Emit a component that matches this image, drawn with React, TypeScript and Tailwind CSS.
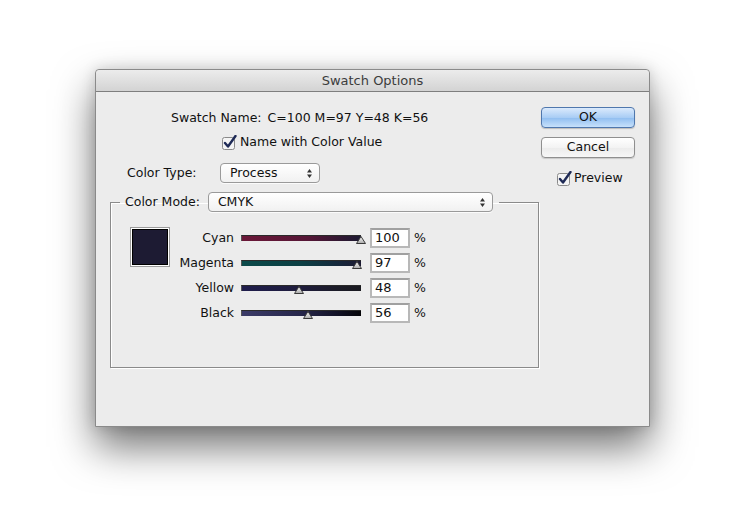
import React from 'react'

const font = { fontFamily: '"DejaVu Sans", "Liberation Sans", sans-serif' }

const channels = [
  { name: 'Cyan', value: 100, bar: 'bg-[linear-gradient(to_right,#6b1838,#561636_55%,#2e1832_85%,#1d1b33)]' },
  { name: 'Magenta', value: 97, bar: 'bg-[linear-gradient(to_right,#0b4a4a,#0c3f44_50%,#15283c_80%,#1d1b33)]' },
  { name: 'Yellow', value: 48, bar: 'bg-[linear-gradient(to_right,#1f1d4c,#1e1c3c_50%,#1c1c28_80%,#1a1a20)]' },
  { name: 'Black', value: 56, bar: 'bg-[linear-gradient(to_right,#3b3b68,#26264a_50%,#121226_80%,#050508)]' },
]

function CheckBox() {
  return (
    <svg width="15" height="15" viewBox="0 0 15 15" className="shrink-0">
      <rect x="0.5" y="2.5" width="12" height="12" rx="2" fill="#f4f4f4" stroke="#8a8a8a" />
      <path d="M3 8 L6 11.5 L13.5 1" fill="none" stroke="#1e2a56" strokeWidth="2.4" strokeLinecap="round" strokeLinejoin="round" />
    </svg>
  )
}

function UpDown() {
  return (
    <svg width="7" height="11" viewBox="0 0 7 11" className="shrink-0">
      <path d="M3.5 1 L6 4.5 L1 4.5 Z" fill="#333" />
      <path d="M3.5 10 L6 6.5 L1 6.5 Z" fill="#333" />
    </svg>
  )
}

function Popup({ label, width }: { label: string; width: string }) {
  return (
    <div
      className={`${width} h-[20px] flex items-center justify-between pl-[9px] pr-[6px] rounded-[4px] border border-[#9a9a9a] bg-[linear-gradient(#ffffff,#f1f1f1)] shadow-[0_1px_0_rgba(255,255,255,0.8)] text-[12.5px] text-[#111]`}
    >
      <span>{label}</span>
      <UpDown />
    </div>
  )
}

function Thumb({ value }: { value: number }) {
  return (
    <svg
      width="10"
      height="8"
      viewBox="0 0 10 8"
      className="absolute top-[1px]"
      style={{ left: `${(value / 100) * 120 - 5}px` }}
    >
      <defs>
        <linearGradient id="th" x1="0" y1="0" x2="0" y2="1">
          <stop offset="0" stopColor="#ffffff" />
          <stop offset="1" stopColor="#a8a8a8" />
        </linearGradient>
      </defs>
      <path d="M5 0.5 L9.5 7.5 L0.5 7.5 Z" fill="url(#th)" stroke="#3a3a3a" strokeWidth="1" />
    </svg>
  )
}

function SliderRow({ name, value, bar }: { name: string; value: number; bar: string }) {
  return (
    <div className="flex items-center h-[20px]">
      <div className="w-[64px] text-right text-[12.5px] text-[#111]">{name}</div>
      <div className="relative ml-[7px] w-[120px] h-[9px] mt-[2px]">
        <div className={`h-[6px] border-l border-[#555] border-t border-t-[#2a2a2a] ${bar}`} />
        <Thumb value={value} />
      </div>
      <div className="ml-[9px] w-[40px] h-[20px] bg-white border-2 border-[#b8b8b8] border-t-[#a0a0a0] flex items-center pl-[3px] text-[13px] text-[#111]">
        {value}
      </div>
      <span className="ml-[4px] text-[12.5px] text-[#111]">%</span>
    </div>
  )
}

export default function App() {
  return (
    <div className="w-[750px] h-[528px] bg-white pt-[69px] pl-[95px] overflow-hidden" style={font}>
      <div className="w-[555px] h-[358px] flex flex-col border border-[#8a8a8a] rounded-t-[4px] bg-[#ececec] shadow-[0_20px_40px_rgba(0,0,0,0.55),0_0_14px_rgba(0,0,0,0.15)]">
        {/* title bar */}
        <div className="h-[22px] shrink-0 flex items-center justify-center rounded-t-[4px] border-b border-[#7e7e7e] bg-[linear-gradient(#ececec,#d3d3d3)] text-[13px] text-[#3c3c3c]">
          Swatch Options
        </div>

        <div className="flex flex-1">
          {/* left */}
          <div className="w-[444px] flex flex-col">
            <div className="mt-[18px] ml-[75px] h-[16px] flex items-center text-[12.5px] text-[#111]">
              <span>Swatch Name:</span>
              <span className="ml-[6px]">C=100 M=97 Y=48 K=56</span>
            </div>
            <div className="mt-[8px] ml-[126px] h-[16px] flex items-center text-[12.5px] text-[#111]">
              <CheckBox />
              <span className="ml-[3px]">Name with Color Value</span>
            </div>
            <div className="mt-[13px] ml-[31px] h-[20px] flex items-center text-[12.5px] text-[#111]">
              <span className="w-[93px]">Color Type:</span>
              <Popup label="Process" width="w-[100px]" />
            </div>

            <fieldset className="mt-[9px] ml-[14px] w-[429px] h-[176px] border border-[#8a8a8a] shadow-[1px_1px_0_#ffffff,inset_1px_1px_0_#ffffff] px-0 pb-0">
              <legend className="ml-[9px] px-[5px] flex items-center h-[20px] text-[12.5px] text-[#111]">
                <span>Color Mode:</span>
                <div className="ml-[8px]">
                  <Popup label="CMYK" width="w-[285px]" />
                </div>
                <div className="w-[1px]" />
              </legend>

              <div className="flex mt-[15px] ml-[19px]">
                <div className="w-[40px] h-[40px] border border-[#9a9a9a] p-[1px] bg-white shrink-0">
                  <div className="w-full h-full border border-black bg-[#1d1b33]" />
                </div>
                <div className="flex flex-col gap-[5px] mt-[1px]">
                  {channels.map((c) => (
                    <SliderRow key={c.name} name={c.name} value={c.value} bar={c.bar} />
                  ))}
                </div>
              </div>
            </fieldset>
          </div>

          {/* right */}
          <div className="ml-[1px] w-[94px] flex flex-col text-[12.5px] text-[#111]">
            <button className="mt-[15px] h-[21px] rounded-[4px] border border-[#4f77ad] bg-[linear-gradient(#dbeafc,#a9cdf5_50%,#8fbdf0_51%,#c7e1fb)] shadow-[0_1px_1px_rgba(0,0,0,0.2)]">
              OK
            </button>
            <button className="mt-[9px] h-[21px] rounded-[4px] border border-[#8f8f8f] bg-[linear-gradient(#ffffff,#f3f3f3_50%,#ebebeb_51%,#f7f7f7)] shadow-[0_1px_1px_rgba(0,0,0,0.15)]">
              Cancel
            </button>
            <div className="mt-[12px] ml-[16px] h-[16px] flex items-center">
              <CheckBox />
              <span className="ml-[2px]">Preview</span>
            </div>
          </div>
        </div>
      </div>
    </div>
  )
}
